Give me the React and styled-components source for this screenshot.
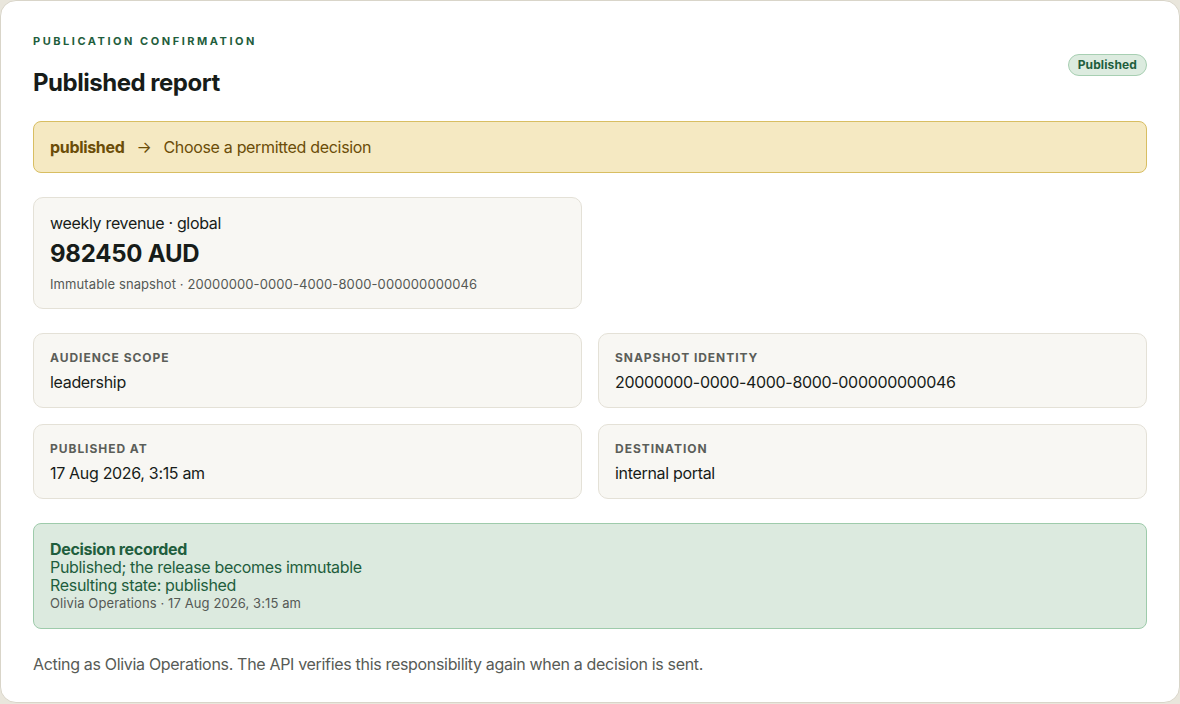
import React from 'react'
import styled, { createGlobalStyle } from 'styled-components'

const GlobalStyle = createGlobalStyle`
    * { box-sizing: border-box; }
    body {
        margin: 0;
        background: #e9e6dc;
        font-family: Inter, "Noto Sans", "Liberation Sans", sans-serif;
        color: #171c19;
    }
`

const Panel = styled.section`
    height: 703px;
    background: #ffffff;
    border: 1px solid #d9d5c9;
    border-radius: 16px;
    padding: 32px;
    display: flex;
    flex-direction: column;
    gap: 24px;
    letter-spacing: -0.02em;
`

const Header = styled.header`
    display: flex;
    align-items: center;
    justify-content: space-between;
`

const Eyebrow = styled.div`
    font-size: 11px;
    line-height: 16px;
    font-weight: 700;
    letter-spacing: 0.23em;
    text-transform: uppercase;
    color: #1f5e3d;
`

const Title = styled.h1`
    margin: 20px 0 0;
    font-size: 24px;
    line-height: 28px;
    font-weight: 700;
    letter-spacing: -0.02em;
`

const Badge = styled.span`
    font-size: 12px;
    line-height: 16px;
    font-weight: 700;
    letter-spacing: 0.01em;
    color: #1f5e3d;
    background: #dcebdf;
    border: 1px solid #a7cfb2;
    border-radius: 999px;
    padding: 2px 9px;
`

const Banner = styled.div`
    display: flex;
    align-items: center;
    gap: 12px;
    background: #f5e9c2;
    border: 1px solid #d8be62;
    border-radius: 8px;
    padding: 14px 16px;
    font-size: 16px;
    line-height: 22px;
    color: #6b4d08;
    strong { font-weight: 700; }
`

const Grid = styled.div`
    display: grid;
    grid-template-columns: 1fr 1fr;
    gap: 16px;
`

const Tile = styled.div`
    background: #f8f7f3;
    border: 1px solid #e4e1d7;
    border-radius: 10px;
    padding: ${p => p.$top ?? 16}px 16px 15px;
`

const MetricName = styled.div`
    font-size: 16px;
    line-height: 22px;
`

const MetricValue = styled.div`
    margin-top: 6px;
    font-size: 24px;
    line-height: 28px;
    font-weight: 700;
    letter-spacing: -0.01em;
`

const Note = styled.div`
    margin-top: ${p => p.$gap || 0}px;
    font-size: 13px;
    line-height: 18px;
    letter-spacing: 0.1px;
    color: #555955;
`

const Label = styled.div`
    font-size: 12px;
    line-height: 16px;
    font-weight: 700;
    letter-spacing: 0.08em;
    text-transform: uppercase;
    color: #5b5e59;
`

const Value = styled.div`
    margin-top: 6px;
    font-size: 16px;
    line-height: 20px;
`

const Outcome = styled.div`
    background: #dceadf;
    border: 1px solid #9ecbab;
    border-radius: 8px;
    padding: 16px;
    font-size: 16px;
    line-height: 18px;
    color: #1f5e3d;
    strong { display: block; font-weight: 700; }
`

const Footnote = styled.p`
    margin: 0;
    font-size: 16px;
    line-height: 22px;
    color: #575b56;
`

const fields = [
    ['Audience scope', 'leadership'],
    ['Snapshot identity', '20000000-0000-4000-8000-000000000046'],
    ['Published at', '17 Aug 2026, 3:15 am'],
    ['Destination', 'internal portal'],
]

export default function App() {
    return (
        <>
            <GlobalStyle />
            <Panel>
                <Header>
                    <div>
                        <Eyebrow>Publication confirmation</Eyebrow>
                        <Title>Published report</Title>
                    </div>
                    <Badge>Published</Badge>
                </Header>

                <Banner>
                    <strong>published</strong>
                    <span>→</span>
                    <span>Choose a permitted decision</span>
                </Banner>

                <Grid>
                    <Tile $top={14}>
                        <MetricName>weekly revenue · global</MetricName>
                        <MetricValue>982450 AUD</MetricValue>
                        <Note $gap={7}>Immutable snapshot · 20000000-0000-4000-8000-000000000046</Note>
                    </Tile>
                </Grid>

                <Grid>
                    {fields.map(([label, value]) => (
                        <Tile key={label}>
                            <Label>{label}</Label>
                            <Value>{value}</Value>
                        </Tile>
                    ))}
                </Grid>

                <Outcome>
                    <strong>Decision recorded</strong>
                    <div>Published; the release becomes immutable</div>
                    <div>Resulting state: published</div>
                    <Note>Olivia Operations · 17 Aug 2026, 3:15 am</Note>
                </Outcome>

                <Footnote>
                    Acting as Olivia Operations. The API verifies this responsibility again when a decision is sent.
                </Footnote>
            </Panel>
        </>
    )
}
